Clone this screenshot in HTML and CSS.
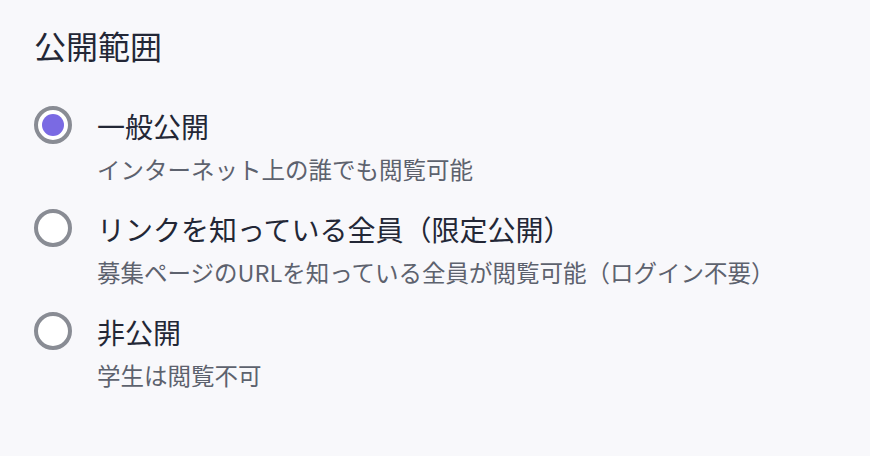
FILE: index.html
```html
<!DOCTYPE html>
<html lang="ja">
<head>
<meta charset="utf-8">
<title>公開範囲</title>
<link rel="stylesheet" href="styles.css">
</head>
<body>
<section class="panel">
  <h2 class="panel-title">公開範囲</h2>
  <div class="options">
    <label class="option">
      <span class="radio radio-checked"><span class="radio-dot"></span></span>
      <span class="option-text">
        <span class="option-label">一般公開</span>
        <span class="option-desc">インターネット上の誰でも閲覧可能</span>
      </span>
    </label>
    <label class="option">
      <span class="radio"></span>
      <span class="option-text">
        <span class="option-label">リンクを知っている全員（限定公開）</span>
        <span class="option-desc">募集ページのURLを知っている全員が閲覧可能（ログイン不要）</span>
      </span>
    </label>
    <label class="option">
      <span class="radio"></span>
      <span class="option-text">
        <span class="option-label">非公開</span>
        <span class="option-desc">学生は閲覧不可</span>
      </span>
    </label>
  </div>
</section>
</body>
</html>
```
FILE: styles.css
```css
html, body {
  margin: 0;
  padding: 0;
  background: #f8f8fb;
}
body {
  font-family: "Noto Sans CJK JP", "Noto Sans", sans-serif;
  color: #232736;
}
.panel {
  padding: 21px 34px 0 34px;
}
.panel-title {
  margin: 0;
  font-size: 32px;
  line-height: 48px;
  font-weight: 400;
  color: #232736;
}
.options {
  display: flex;
  flex-direction: column;
  gap: 22px;
  margin-top: 37px;
}
.option {
  display: flex;
  align-items: flex-start;
  gap: 25px;
}
.radio {
  box-sizing: border-box;
  width: 38px;
  height: 38px;
  border: 4px solid #898c94;
  border-radius: 50%;
  background: #ffffff;
  display: flex;
  align-items: center;
  justify-content: center;
  flex: none;
}
.radio-dot {
  width: 22px;
  height: 22px;
  border-radius: 50%;
  background: #7a6ae3;
}
.option-text {
  display: flex;
  flex-direction: column;
  gap: 5px;
}
.option-label {
  font-size: 28px;
  line-height: 40px;
  font-weight: 400;
  color: #232736;
}
.option-desc {
  font-size: 23.5px;
  line-height: 36px;
  color: #5d626e;
}
```
